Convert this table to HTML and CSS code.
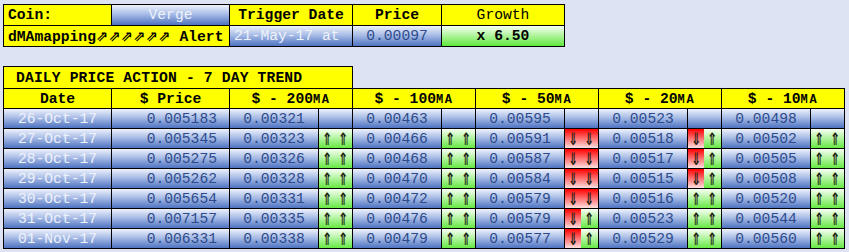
FILE: index.html
```html
<!DOCTYPE html>
<html>
<head>
<meta charset="utf-8">
<link rel="stylesheet" href="styles.css">
</head>
<body>
<div class="top">
  <div class="c yel left b">Coin:</div>
  <div class="c blu wt">Verge</div>
  <div class="c yel b">Trigger Date</div>
  <div class="c yel b">Price</div>
  <div class="c yel">Growth</div>
  <div class="c yel left b span2"><span>dMAmapping<span class="ne">⇗⇗⇗⇗⇗⇗</span> Alert</span></div>
  <div class="c blu wt left">21-May-17 at</div>
  <div class="c blu num">0.00097</div>
  <div class="c grn b">x 6.50</div>
</div>

<div class="title">DAILY PRICE ACTION - 7 DAY TREND</div>

<div class="grid">
  <div class="c yel b">Date</div>
  <div class="c yel b">$ Price</div>
  <div class="c yel b span2"><span>$ - 200<span class="ma">MA</span></span></div>
  <div class="c yel b span2"><span>$ - 100<span class="ma">MA</span></span></div>
  <div class="c yel b span2"><span>$ - 50<span class="ma">MA</span></span></div>
  <div class="c yel b span2"><span>$ - 20<span class="ma">MA</span></span></div>
  <div class="c yel b span2"><span>$ - 10<span class="ma">MA</span></span></div>

  <div class="c blu wt">26-Oct-17</div><div class="c blu num right">0.005183</div>
  <div class="c blu num">0.00321</div><div class="c blu"></div>
  <div class="c blu num">0.00463</div><div class="c blu"></div>
  <div class="c blu num">0.00595</div><div class="c blu"></div>
  <div class="c blu num">0.00523</div><div class="c blu"></div>
  <div class="c blu num">0.00498</div><div class="c blu"></div>

  <div class="c blu wt">27-Oct-17</div><div class="c blu num right">0.005345</div>
  <div class="c blu num">0.00323</div><div class="c arr"><span class="up"><i>⇑</i></span><span class="up"><i>⇑</i></span></div>
  <div class="c blu num">0.00466</div><div class="c arr"><span class="up"><i>⇑</i></span><span class="up"><i>⇑</i></span></div>
  <div class="c blu num">0.00591</div><div class="c arr"><span class="dn"><i>⇓</i></span><span class="dn"><i>⇓</i></span></div>
  <div class="c blu num">0.00518</div><div class="c arr"><span class="dn"><i>⇓</i></span><span class="up"><i>⇑</i></span></div>
  <div class="c blu num">0.00502</div><div class="c arr"><span class="up"><i>⇑</i></span><span class="up"><i>⇑</i></span></div>

  <div class="c blu wt">28-Oct-17</div><div class="c blu num right">0.005275</div>
  <div class="c blu num">0.00326</div><div class="c arr"><span class="up"><i>⇑</i></span><span class="up"><i>⇑</i></span></div>
  <div class="c blu num">0.00468</div><div class="c arr"><span class="up"><i>⇑</i></span><span class="up"><i>⇑</i></span></div>
  <div class="c blu num">0.00587</div><div class="c arr"><span class="dn"><i>⇓</i></span><span class="dn"><i>⇓</i></span></div>
  <div class="c blu num">0.00517</div><div class="c arr"><span class="dn"><i>⇓</i></span><span class="up"><i>⇑</i></span></div>
  <div class="c blu num">0.00505</div><div class="c arr"><span class="up"><i>⇑</i></span><span class="up"><i>⇑</i></span></div>

  <div class="c blu wt">29-Oct-17</div><div class="c blu num right">0.005262</div>
  <div class="c blu num">0.00328</div><div class="c arr"><span class="up"><i>⇑</i></span><span class="up"><i>⇑</i></span></div>
  <div class="c blu num">0.00470</div><div class="c arr"><span class="up"><i>⇑</i></span><span class="up"><i>⇑</i></span></div>
  <div class="c blu num">0.00584</div><div class="c arr"><span class="dn"><i>⇓</i></span><span class="dn"><i>⇓</i></span></div>
  <div class="c blu num">0.00515</div><div class="c arr"><span class="dn"><i>⇓</i></span><span class="up"><i>⇑</i></span></div>
  <div class="c blu num">0.00508</div><div class="c arr"><span class="up"><i>⇑</i></span><span class="up"><i>⇑</i></span></div>

  <div class="c blu wt">30-Oct-17</div><div class="c blu num right">0.005654</div>
  <div class="c blu num">0.00331</div><div class="c arr"><span class="up"><i>⇑</i></span><span class="up"><i>⇑</i></span></div>
  <div class="c blu num">0.00472</div><div class="c arr"><span class="up"><i>⇑</i></span><span class="up"><i>⇑</i></span></div>
  <div class="c blu num">0.00579</div><div class="c arr"><span class="dn"><i>⇓</i></span><span class="dn"><i>⇓</i></span></div>
  <div class="c blu num">0.00516</div><div class="c arr"><span class="up"><i>⇑</i></span><span class="up"><i>⇑</i></span></div>
  <div class="c blu num">0.00520</div><div class="c arr"><span class="up"><i>⇑</i></span><span class="up"><i>⇑</i></span></div>

  <div class="c blu wt">31-Oct-17</div><div class="c blu num right">0.007157</div>
  <div class="c blu num">0.00335</div><div class="c arr"><span class="up"><i>⇑</i></span><span class="up"><i>⇑</i></span></div>
  <div class="c blu num">0.00476</div><div class="c arr"><span class="up"><i>⇑</i></span><span class="up"><i>⇑</i></span></div>
  <div class="c blu num">0.00579</div><div class="c arr"><span class="dn"><i>⇓</i></span><span class="up"><i>⇑</i></span></div>
  <div class="c blu num">0.00523</div><div class="c arr"><span class="up"><i>⇑</i></span><span class="up"><i>⇑</i></span></div>
  <div class="c blu num">0.00544</div><div class="c arr"><span class="up"><i>⇑</i></span><span class="up"><i>⇑</i></span></div>

  <div class="c blu wt">01-Nov-17</div><div class="c blu num right">0.006331</div>
  <div class="c blu num">0.00338</div><div class="c arr"><span class="up"><i>⇑</i></span><span class="up"><i>⇑</i></span></div>
  <div class="c blu num">0.00479</div><div class="c arr"><span class="up"><i>⇑</i></span><span class="up"><i>⇑</i></span></div>
  <div class="c blu num">0.00577</div><div class="c arr"><span class="dn"><i>⇓</i></span><span class="up"><i>⇑</i></span></div>
  <div class="c blu num">0.00529</div><div class="c arr"><span class="up"><i>⇑</i></span><span class="up"><i>⇑</i></span></div>
  <div class="c blu num">0.00560</div><div class="c arr"><span class="up"><i>⇑</i></span><span class="up"><i>⇑</i></span></div>
</div>
</body>
</html>
```
FILE: styles.css
```css
html, body {
  background: #dee3f3;
}
body {
  margin: 4px 3px;
  font-family: "Liberation Mono", "Courier New", monospace;
  font-size: 14.67px;
  color: #000;
}
.top {
  display: grid;
  grid-template-columns: 108px 118px 123px 89px 123px;
  grid-template-rows: 21px 21px;
  width: max-content;
  border-top: 1px solid #000;
  border-left: 1px solid #000;
}
.title {
  margin-top: 19px;
  box-sizing: border-box;
  width: 350px;
  height: 22px;
  border: 1px solid #000;
  border-bottom: none;
  background: #ffff00;
  font-weight: bold;
  padding-left: 12px;
  letter-spacing: 0.15px;
  display: flex;
  align-items: center;
}
.grid {
  display: grid;
  grid-template-columns: 108px 118px 89px 34px 89px 34px 89px 34px 89px 34px 89px 34px;
  grid-auto-rows: 20px;
  width: max-content;
  border-top: 1px solid #000;
  border-left: 1px solid #000;
}
.c {
  border-right: 1px solid #000;
  border-bottom: 1px solid #000;
  display: flex;
  align-items: center;
  justify-content: center;
  white-space: nowrap;
  overflow: hidden;
}
.span2 { grid-column: span 2; }
.left { justify-content: flex-start; padding-left: 4px; }
.right { justify-content: flex-end; padding-right: 12px; }
.b { font-weight: bold; }
.yel { background: #ffff00; }
.blu { background: linear-gradient(#eef2fb, #a9bde6 45%, #4e73c1); }
.grn { background: linear-gradient(#f8fff4, #5fe83c); }
.wt { color: #eef2fb; }
.num { color: #2c4a8c; }
.ne {
  font-family: "DejaVu Sans", sans-serif;
  font-size: 14.5px;
  font-weight: bold;
  letter-spacing: 0.3px;
}
.ma {
  font-size: 12px;
  letter-spacing: 1.6px;
}
.arr {
  display: grid;
  grid-template-columns: 16px 17px;
  align-items: stretch;
}
.arr span {
  display: flex;
  align-items: center;
  justify-content: center;
  font-family: "DejaVu Sans", sans-serif;
  font-size: 17px;
  font-weight: bold;
  color: #1e1e10;
}
.arr i {
  font-style: normal;
  display: inline-block;
  transform: scaleX(0.7);
}
.up { background: linear-gradient(#f8fff4, #5fe83c); }
.dn { background: linear-gradient(#ff0000, #ffecec); }
```
